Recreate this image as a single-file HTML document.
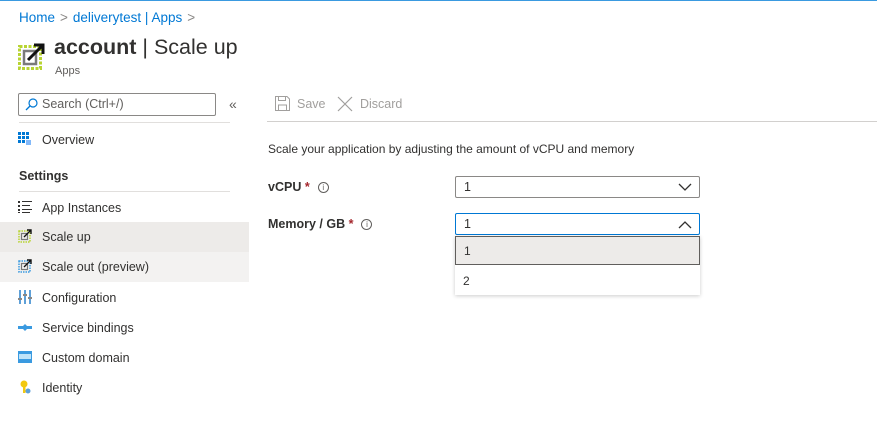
<!DOCTYPE html>
<html><head><meta charset="utf-8"><style>
*{margin:0;padding:0;box-sizing:border-box}
body{width:877px;height:444px;background:#fff;font-family:"Segoe UI","Liberation Sans",sans-serif;color:#323130;position:relative;overflow:hidden;font-size:13px}
.a{position:absolute;white-space:nowrap}
.topline{left:0;top:0;width:877px;height:1px;background:#3a9ae0}
.crumb{left:19px;top:10px;font-size:13.5px;color:#0078d4}
.crumb span{color:#8a8886;margin:0 5px}
.title{left:54px;top:35px;font-size:21.5px;color:#323130}
.title b{font-weight:600}
.sub{left:55px;top:65px;font-size:11px;color:#605e5c}
.search{left:18px;top:93px;width:198px;height:23px;border:1px solid #8a8886;border-radius:2px}
.search .t{position:absolute;left:23px;top:3px;font-size:12.5px;color:#605e5c}
.hr{height:1px;background:#e1dfdd}
.nav{left:0;width:249px;height:30px}
.nav .t{position:absolute;left:42px;top:8px;font-size:12.5px;color:#323130}
.nav .ic{position:absolute;left:18px;top:7px;width:14px;height:14px}
.lbl{font-size:12.5px;color:#323130;font-weight:600}
.star{color:#a4262c}
.info{display:inline-block;width:11px;height:11px;border:1px solid #605e5c;border-radius:50%;font-size:8px;line-height:9px;text-align:center;font-weight:400;vertical-align:middle;margin-left:8px;color:#605e5c}
.dd{border:1px solid #8a8886;border-radius:2px;height:22px;width:245px;left:455px}
.dd .t{position:absolute;left:8px;top:3px;font-size:12.5px}
</style></head><body>
<div class="a topline"></div>
<div class="a crumb">Home<span>&gt;</span>deliverytest | Apps<span>&gt;</span></div>
<svg class="a" style="left:18px;top:42px" width="28" height="30" viewBox="0 0 28 30">
<rect x="1.5" y="4.5" width="21" height="22" fill="none" stroke="#b8d432" stroke-width="3" stroke-dasharray="3 1.5"/>
<rect x="6" y="9" width="12" height="13" fill="none" stroke="#7a7a7a" stroke-width="2.5"/>
<path d="M10 18 L24 4" stroke="#111" stroke-width="3"/><path d="M16 3 H25 V12" fill="none" stroke="#111" stroke-width="3"/>
</svg>
<div class="a title"><b>account</b> | Scale up</div>
<div class="a sub">Apps</div>
<div class="a search"><svg style="position:absolute;left:6px;top:4px" width="13" height="13" viewBox="0 0 13 13"><circle cx="8" cy="5" r="4" fill="none" stroke="#0078d4" stroke-width="1.2"/><path d="M5 8 L1 12" stroke="#0078d4" stroke-width="1.3"/></svg><span class="t">Search (Ctrl+/)</span></div>
<div class="a" style="left:229px;top:96px;color:#605e5c;font-size:14px">«</div>
<div class="a hr" style="left:19px;top:122px;width:211px"></div>
<div class="a nav" style="top:125px"><svg class="ic" viewBox="0 0 14 14"><g fill="#0078d4"><rect x="0" y="0" width="3" height="3"/><rect x="4" y="0" width="3" height="3"/><rect x="8" y="0" width="3" height="3"/><rect x="0" y="4" width="3" height="3"/><rect x="4" y="4" width="3" height="3"/><rect x="8" y="4" width="3" height="3"/><rect x="0" y="8" width="3" height="3"/><rect x="4" y="8" width="3" height="3"/></g><rect x="8" y="8" width="5" height="5" fill="#83b9f9"/></svg><span class="t">Overview</span></div>
<div class="a lbl" style="left:19px;top:169px">Settings</div>
<div class="a hr" style="left:19px;top:191px;width:211px"></div>
<div class="a nav" style="top:193px"><svg class="ic" viewBox="0 0 14 14"><g fill="#323130"><rect x="0" y="1" width="2" height="2"/><rect x="0" y="5" width="2" height="2"/><rect x="0" y="9" width="2" height="2"/><rect x="4" y="1" width="10" height="1"/><rect x="4" y="5" width="8" height="1"/><rect x="4" y="9" width="10" height="1"/><rect x="0" y="12" width="2" height="1"/><rect x="4" y="12" width="8" height="1"/></g></svg><span class="t">App Instances</span></div>
<div class="a nav" style="top:222px;background:#edebe9"><svg class="ic" viewBox="0 0 14 14"><rect x="1" y="2" width="11" height="11" fill="none" stroke="#b8d432" stroke-width="1.5" stroke-dasharray="1.5 1"/><rect x="3.5" y="4.5" width="6" height="6" fill="none" stroke="#777" stroke-width="1.2"/><path d="M6 8 L13 1 M9 1 H13 V5" fill="none" stroke="#111" stroke-width="1.4"/></svg><span class="t">Scale up</span></div>
<div class="a nav" style="top:252px;background:#f3f2f1"><svg class="ic" viewBox="0 0 14 14"><rect x="1" y="2" width="11" height="11" fill="none" stroke="#3a9ae0" stroke-width="1.5" stroke-dasharray="1.5 1"/><rect x="3.5" y="4.5" width="6" height="6" fill="none" stroke="#777" stroke-width="1.2"/><path d="M6 8 L13 1 M9 1 H13 V5" fill="none" stroke="#111" stroke-width="1.4"/></svg><span class="t">Scale out (preview)</span></div>
<div class="a nav" style="top:283px"><svg class="ic" viewBox="0 0 14 14"><g fill="#5ea0d8"><rect x="1" y="0" width="2" height="14"/><rect x="6" y="0" width="2" height="14"/><rect x="11" y="0" width="2" height="14"/></g><g fill="#8a8886"><rect x="0" y="8" width="4" height="2"/><rect x="5" y="4" width="4" height="2"/><rect x="10" y="7" width="4" height="2"/></g></svg><span class="t">Configuration</span></div>
<div class="a nav" style="top:313px"><svg class="ic" viewBox="0 0 14 14"><path d="M0 6 H5 L7 4 L9 6 H14 V9 H9 L7 11 L5 9 H0 Z" fill="#3a9ae0"/></svg><span class="t">Service bindings</span></div>
<div class="a nav" style="top:343px"><svg class="ic" viewBox="0 0 14 14"><rect x="0" y="1" width="14" height="12" fill="#3a9ae0"/><rect x="1" y="4" width="12" height="5" fill="#bfe3f8"/></svg><span class="t">Custom domain</span></div>
<div class="a nav" style="top:373px"><svg class="ic" viewBox="0 0 14 14"><circle cx="6" cy="4" r="3.5" fill="#f2c811"/><rect x="5" y="6" width="2.5" height="7" fill="#f2c811"/><circle cx="10" cy="11" r="2.5" fill="#5ea0d8"/></svg><span class="t">Identity</span></div>

<svg class="a" style="left:275px;top:96px" width="15" height="15" viewBox="0 0 15 15"><path d="M0.5 0.5 H12 L14.5 3 V14.5 H0.5 Z" fill="none" stroke="#a19f9d"/><rect x="3.5" y="0.5" width="7" height="4" fill="none" stroke="#a19f9d"/><rect x="3.5" y="9" width="8" height="5.5" fill="none" stroke="#a19f9d"/></svg>
<div class="a" style="left:297px;top:97px;color:#a19f9d;font-size:12.5px">Save</div>
<svg class="a" style="left:337px;top:96px" width="16" height="16" viewBox="0 0 16 16"><path d="M1 1 L15 15 M15 1 L1 15" stroke="#a19f9d" stroke-width="1.2"/></svg>
<div class="a" style="left:360px;top:97px;color:#a19f9d;font-size:12.5px">Discard</div>
<div class="a hr" style="left:267px;top:121px;width:610px;background:#d2d0ce"></div>

<div class="a" style="left:268px;top:142px;font-size:12px">Scale your application by adjusting the amount of vCPU and memory</div>
<div class="a lbl" style="left:268px;top:180px">vCPU <span class="star">*</span><span class="info">i</span></div>
<div class="a dd" style="top:176px"><span class="t">1</span><svg style="position:absolute;right:7px;top:6px" width="14" height="9" viewBox="0 0 14 9"><path d="M1 1 L7 7 L13 1" fill="none" stroke="#323130" stroke-width="1.3"/></svg></div>
<div class="a lbl" style="left:268px;top:217px">Memory / GB <span class="star">*</span><span class="info">i</span></div>
<div class="a dd" style="top:213px;border:1px solid #0078d4"><span class="t">1</span><svg style="position:absolute;right:7px;top:6px" width="14" height="9" viewBox="0 0 14 9"><path d="M1 8 L7 2 L13 8" fill="none" stroke="#323130" stroke-width="1.3"/></svg></div>
<div class="a" style="left:455px;top:236px;width:245px;height:59px;background:#fff;box-shadow:0 1px 4px rgba(0,0,0,.2)"></div>
<div class="a" style="left:455px;top:236px;width:245px;height:29px;background:#edebe9;border:1px solid #605e5c"><span style="position:absolute;left:8px;top:7px;font-size:12px">1</span></div>
<div class="a" style="left:463px;top:274px;font-size:12px">2</div>
</body></html>
